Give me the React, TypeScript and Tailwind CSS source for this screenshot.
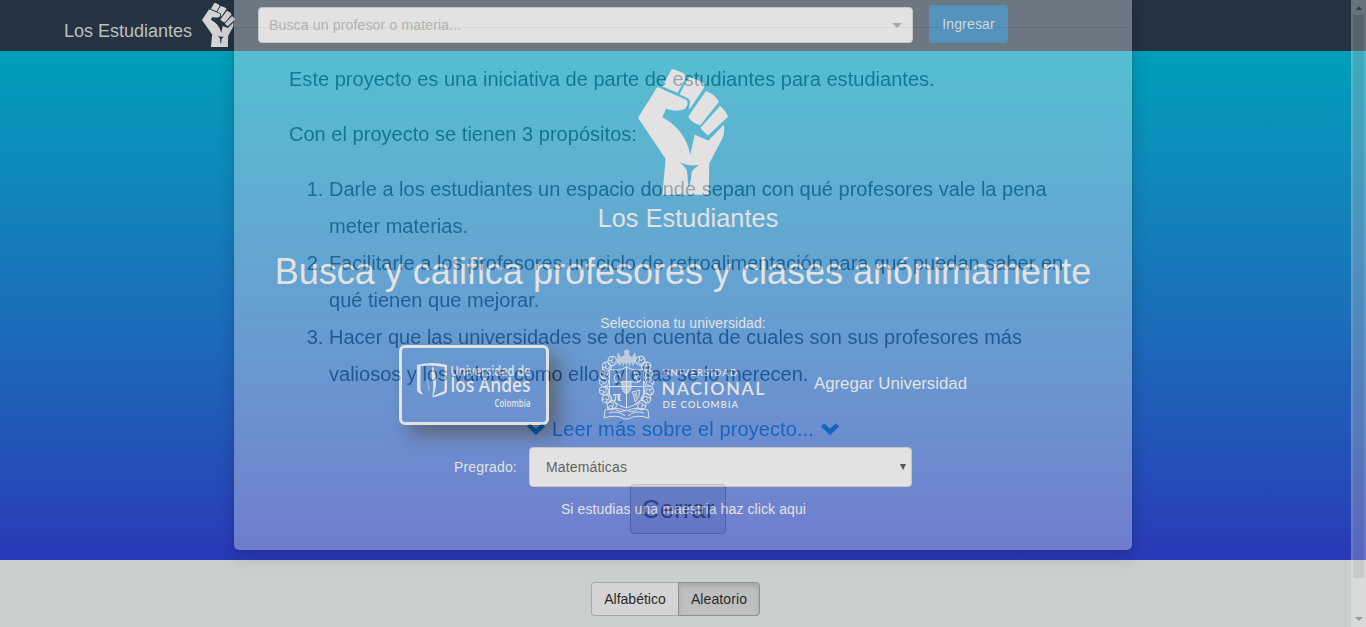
import React from "react";

function Fist({ className }: { className: string }) {
  return (
    <svg viewBox="54 41 270 377" preserveAspectRatio="none" className={className} fill="currentColor">
      <path d="M155 42Q162 41 190 54Q199 60 198 66L173 112L127 93Z" />
      <path d="M208 66Q235 73 252 85Q256 92 250 100L208 163Q207 150 210 142Q211 133 201 127L179 117Q196 82 208 66Z" />
      <path d="M258 107Q285 117 297 139L241 209Q213 202 205 183Z" />
      <path d="M300 152Q317 165 324 184L264 240Q245 225 242 216Z" />
      <path
        fillRule="evenodd"
        d="M112 95L200 134Q208 145 195 160Q175 172 138 160L127 185Q196 222 211 298L224 237L265 256L311 208Q315 225 309 245L268 323L266 417L127 417L137 310L54 187ZM180 321Q208 333 238 328Q218 340 215 350Q213 380 206 396Q203 370 201 345Q195 332 180 321Z"
      />
    </svg>
  );
}

function AndesLogo() {
  return (
    <svg viewBox="0 0 144 74" className="h-[74px] w-[144px]" fill="#fff" fontFamily="Open Sans, Liberation Sans, sans-serif">
      <path d="M15 17Q30 13 45 17V42Q45 46 39 47L31 49.500V48L42.500 43V19Q30 16.500 18.500 18V42L21 46.500Q15 45 15 42Z" />
      <path d="M30.500 18Q35 26 34 37Q33 45 30 49.500Q32 39 31 34Q28.500 27 30.500 18Z" />
      <path d="M27 21Q24 30 28 40L27 44Q23 31 27 21Z" opacity=".4" />
      <text x="48.500" y="27.500" fontSize="14.300" fontWeight="600" textLength="80" lengthAdjust="spacingAndGlyphs">Universidad de</text>
      <text x="48.500" y="44.300" fontSize="19.500" fontWeight="600" textLength="80" lengthAdjust="spacingAndGlyphs">los Andes</text>
      <text x="92.500" y="58.600" fontSize="9.800" fontWeight="600" textLength="36" lengthAdjust="spacingAndGlyphs">Colombia</text>
    </svg>
  );
}

function Leaf({ x, y, angle }: { x: number; y: number; angle: number }) {
  return (
    <g transform={`translate(${x} ${y}) rotate(${angle})`}>
      <path d="M-4.500 4Q-6-2 0-4Q5-3 4 2Q2 5-1 3Q-3 0 1 0M-4 4Q0 7 5 4M-3-2L-1 1M2-4L1-1" />
    </g>
  );
}

function NacionalLogo() {
  const leaves = [
    [13, 11, -30], [7, 17, -50], [5, 25, -80], [4, 33, -95], [4, 42, -110], [7, 50, -130], [12, 57, -150],
    [42, 11, 30], [48, 17, 50], [50, 25, 80], [51, 33, 95], [51, 42, 110], [48, 50, 130], [43, 57, 150],
  ];
  return (
    <svg viewBox="0 0 166 72" className="h-[72px] w-[166px]" fill="#fff" fontFamily="Lato, Open Sans, sans-serif">
      <g fill="none" stroke="#fff" strokeWidth=".95">
        <path d="M10.500 20Q19 23 27.500 18Q36 23 44.500 20V46Q43 54 27.500 59Q12 54 10.500 46Z" />
        <path d="M9 37.500H46M27.500 18V59" />
        <path d="M23 32.500H32V39Q31 43 27.500 45Q24 43 23 39Z" fill="#fff" fillOpacity=".6" />
        <path d="M14 33H18Q13 29 17 25Q21 24 22 28L20 33H24" />
        <path d="M34 24Q38 22 40 26L35 29L41 33M35 22L39 34M32 32Q36 35 42 31" />
        <path d="M33 43L41 41Q41 48 36 53L35 47ZM35 44L38 50M37 43L38 47" />
        <path d="M6 61Q17 57 27 62Q38 57 49 61L50 69Q38 65 29 70H26Q17 65 5 69ZM10 64Q19 61 26 67M45 64Q36 61 29 67M15 59Q21 65 27 61M40 59Q34 65 28 61" />
        {leaves.map(([x, y, angle]) => (
          <Leaf key={`${x}-${y}`} x={x} y={y} angle={angle} />
        ))}
      </g>
      <path
        d="M19 3Q16 12 21 17L23 13L24 18L26 13L27.500 18L29 13L31 18L32 13L34 17Q39 12 36 3L33 8L30 6L30.500 2L28 0L25 2L25.500 6L22 8Z"
        opacity=".7"
      />
      <text x="14" y="51.500" fontSize="15" fontWeight="700" fontFamily="Liberation Serif, serif">π</text>
      <text x="63.500" y="26.700" fontSize="9.300" fontWeight="600" textLength="74.500" lengthAdjust="spacing">UNIVERSIDAD</text>
      <text x="62.500" y="46" fontSize="17.800" fontWeight="600" textLength="103" lengthAdjust="spacing">NACIONAL</text>
      <text x="63.500" y="59" fontSize="9.600" fontWeight="600" textLength="75.500" lengthAdjust="spacing">DE COLOMBIA</text>
    </svg>
  );
}

function ChevronDown() {
  return (
    <svg viewBox="0 0 20 14" className="inline-block h-[14px] w-[20px]" fill="none" stroke="currentColor" strokeWidth="4.600">
      <path d="M2.500 2.800L10 10L17.500 2.800" />
    </svg>
  );
}

function NavBar() {
  return (
    <nav className="flex h-[51px] bg-[#2c3e50] text-white">
      <div className="ml-16 flex w-[194px]">
        <span className="w-[138px] pt-[17px] text-[18px] leading-7 text-white/88">Los Estudiantes</span>
        <Fist className="mt-[3px] h-[44px] w-[33px]" />
      </div>
      <div className="mt-[7px] flex h-9 w-[655px] items-center justify-between rounded border border-[#ccc] bg-white pr-2.5 pl-2.5 text-[14px] tracking-[0.16px] text-[#aaa]">
        <span>Busca un profesor o materia...</span>
        <span className="border-x-[5px] border-t-[5px] border-x-transparent border-t-[#999]" />
      </div>
      <button className="mt-[5px] ml-4 h-[38px] w-[79px] rounded bg-[#0072bb] text-[14px] tracking-[0.16px] text-white/88">Ingresar</button>
    </nav>
  );
}

function Hero() {
  return (
    <header className="flex h-[509px] flex-col items-center bg-linear-to-b from-[#00c0df] to-[#3244dc] text-[14px] text-white">
      <Fist className="mt-[18px] h-[126px] w-[90px]" />
      <div className="mt-[5px] pl-[10px] text-[25.2px] leading-9 tracking-[0.1px]">Los Estudiantes</div>
      <h1 className="mt-[16px] text-[36px] leading-[40px] whitespace-nowrap">Busca y califica profesores y clases anónimamente</h1>
      <p className="mt-[21px] leading-5 tracking-[0.08px]">Selecciona tu universidad:</p>
      <div className="mt-3 flex w-[568px]">
        <div className="h-20 w-[150px] rounded-md border-3 border-white shadow-[10px_10px_20px_rgba(0,0,0,0.7)]">
          <AndesLogo />
        </div>
        <div className="ml-[50px] pt-1">
          <NacionalLogo />
        </div>
        <span className="ml-[49px] pt-[27px] text-[16.8px] leading-6 whitespace-nowrap">Agregar Universidad</span>
      </div>
      <div className="mt-[22px] flex w-[458px] items-center">
        <span className="w-[75px] tracking-[0.16px]">Pregrado:</span>
        <div className="flex h-10 w-[383px] items-center justify-between rounded border border-[#ccc] bg-white pr-[5px] pl-4 tracking-[0.16px] text-[#111]">
          <span>Matemáticas</span>
          <svg viewBox="0 0 6 6" className="h-1.5 w-1.5" fill="#000">
            <path d="M0 0H6L3 6Z" />
          </svg>
        </div>
      </div>
      <p className="mt-3 pl-px leading-5 tracking-[0.1px]">Si estudias una maestria haz click aqui</p>
    </header>
  );
}

function SortButtons() {
  return (
    <section className="flex h-[67px] justify-center bg-[#f4f8f9] pt-[22px] pr-[15px] text-[14px] text-[#333]">
      <button className="h-[34px] w-[87px] rounded-l border border-r-0 border-[#ccc] bg-white">Alfabético</button>
      <button className="h-[34px] w-[82px] rounded-r border border-[#adadad] bg-[#e6e6e6] tracking-[0.1px] shadow-[inset_0_3px_5px_rgba(0,0,0,0.125)]">Aleatorio</button>
    </section>
  );
}

function ScrollBar() {
  return (
    <div className="flex w-[15px] flex-col items-center bg-[#f1f1f1]">
      <span className="mt-1.5 border-x-[3.5px] border-b-4 border-x-transparent border-b-[#505050]" />
      <div className="mt-[5px] h-[563px] w-[11px] bg-[#c1c1c1]" />
      <span className="mt-[39px] border-x-[4px] border-t-4 border-x-transparent border-t-[#333]" />
    </div>
  );
}

function ProjectModal() {
  return (
    <div className="absolute inset-0 flex overflow-hidden opacity-[0.335]">
      <div className="flex-1 pl-[233px]">
        <div className="h-[550.5px] w-[900px] rounded-b-md border border-t-0 border-black/20 bg-white bg-clip-padding text-[20px] leading-[37px] tracking-[0.026px] text-[#2c3e50] shadow-[0_5px_15px_rgba(0,0,0,0.5)]">
          <div className="h-[27.5px] border-b border-[#e5e5e5]" />
          <div className="px-[55px] pt-[33px]">
            <p>Este proyecto es una iniciativa de parte de estudiantes para estudiantes.</p>
            <p className="mt-[18px]">Con el proyecto se tienen 3 propósitos:</p>
            <ol className="mt-[18px] list-decimal pl-10 tracking-[0.005px] whitespace-nowrap">
              <li>
                Darle a los estudiantes un espacio donde sepan con qué profesores vale la pena
                <br />
                meter materias.
              </li>
              <li>
                Facilitarle a los profesores un ciclo de retroalimentación para que puedan saber en
                <br />
                qué tienen que mejorar.
              </li>
              <li>
                Hacer que las universidades se den cuenta de cuales son sus profesores más
                <br />
                valiosos y los valore como ellos y ellas se lo merecen.
              </li>
            </ol>
            <div className="mt-[18px] flex items-center justify-center gap-1.5 tracking-[0.1px] text-[#0680cc]">
              <ChevronDown />
              <span>Leer más sobre el proyecto...</span>
              <ChevronDown />
            </div>
            <div className="mt-[36.5px] flex justify-center pr-[10px]">
              <button className="h-[50px] w-24 rounded border border-[#999] bg-[#e0e0e0] text-[25.2px] tracking-[0.3px] text-[#333]">Cerrar</button>
            </div>
          </div>
        </div>
      </div>
      <ScrollBar />
    </div>
  );
}

export default function App() {
  return (
    <div className="relative h-[627px] w-[1366px] overflow-hidden font-['Liberation_Sans',Arial,sans-serif]">
      <NavBar />
      <Hero />
      <SortButtons />
      <div className="absolute inset-0 bg-black/17" />
      <ProjectModal />
    </div>
  );
}
